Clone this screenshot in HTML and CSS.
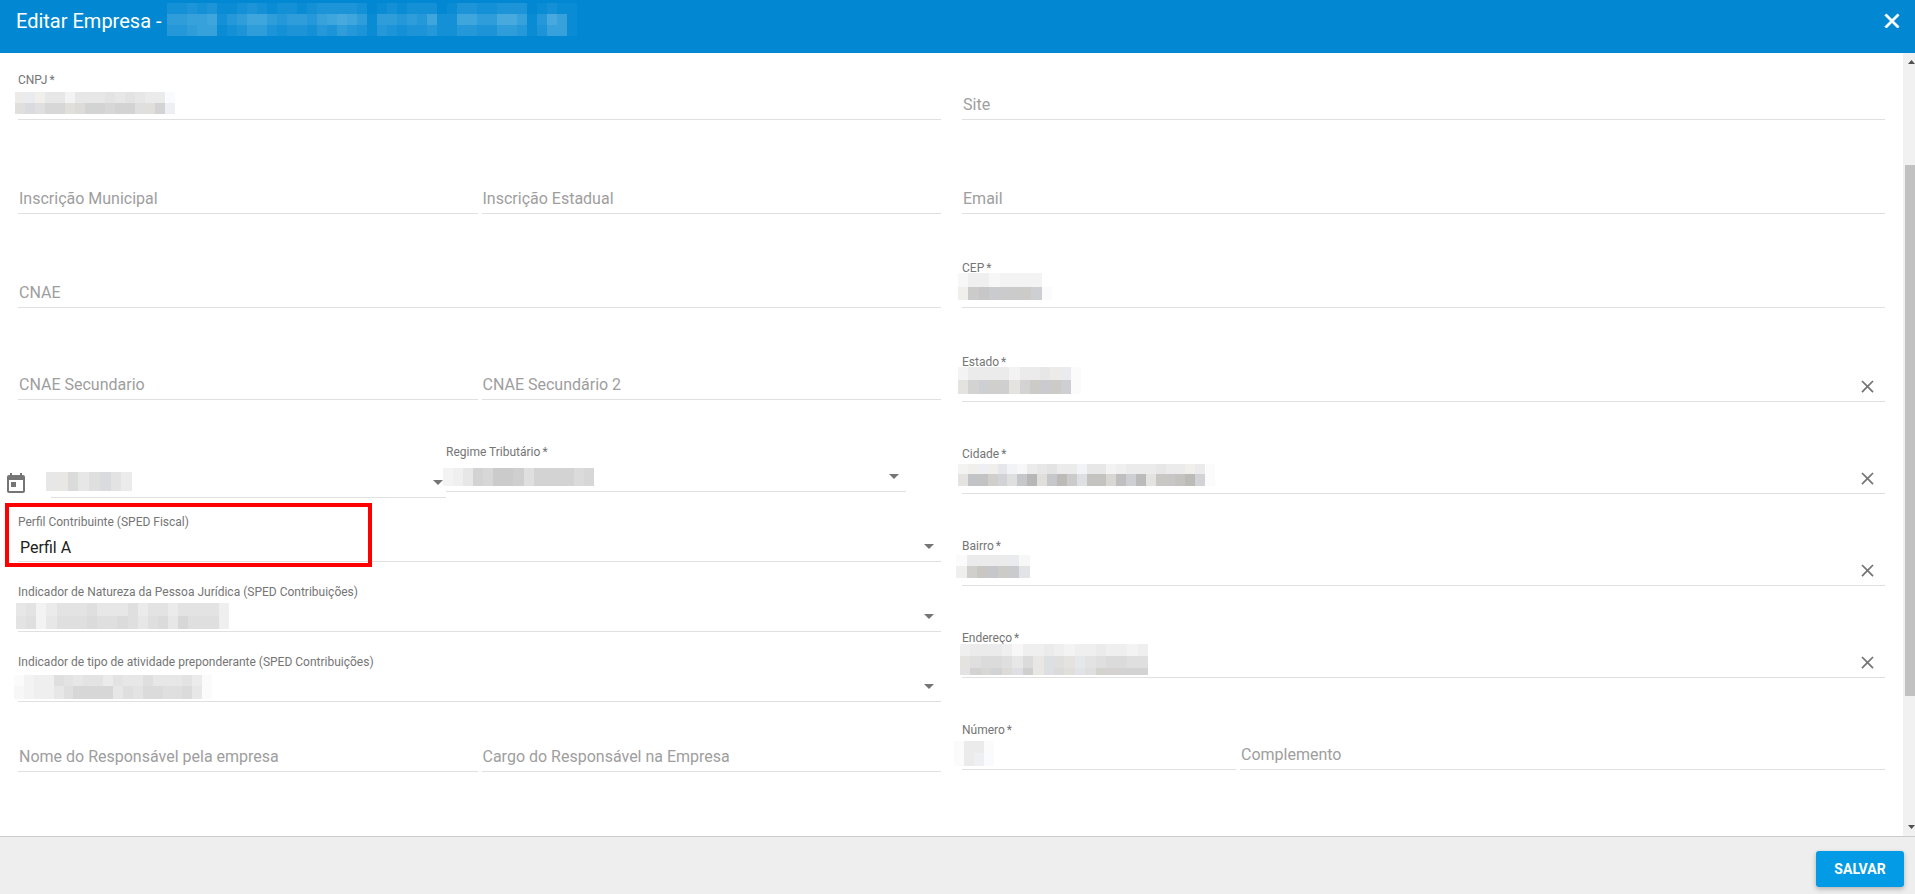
FILE: index.html
```html
<!DOCTYPE html>
<html lang="pt-BR">
<head>
<meta charset="utf-8">
<title>Editar Empresa</title>
<link rel="stylesheet" href="styles.css">
</head>
<body>
<header class="topbar">
  <h1 class="title">Editar Empresa -</h1>
  <span class="redacted-title" data-width="410" data-heights="11,11,11" data-light="22323112321221233332012122201332233301211|55667245775455467875155454722775588614861|44566123553233243543143233422443355413661"></span>
  <button class="icon-btn close" type="button" aria-label="Fechar"><svg width="24" height="24" viewBox="0 0 24 24"><path fill="currentColor" d="M19 6.41L17.59 5 12 10.59 6.41 5 5 6.41 10.59 12 5 17.59 6.41 19 12 13.41 17.59 19 19 17.59 13.41 12z"/></svg></button>
</header>

<main class="content">
  <form class="form" id="empresa">
    <div class="column">
      <div class="row">
        <div class="field"><label for="cnpj">CNPJ<span class="req">*</span></label><input id="cnpj" type="text">
          <span class="mask mask-cnpj" data-width="160" data-heights="11,11" data-rows="-f+f-eggdggghghgff+b|-i+jikk-i-jllklli-il+e"></span></div>
      </div>
      <div class="row halves">
        <div class="field"><input class="bare" type="text" aria-label="Inscrição Municipal" placeholder="Inscrição Municipal"></div>
        <div class="field"><input class="bare" type="text" aria-label="Inscrição Estadual" placeholder="Inscrição Estadual"></div>
      </div>
      <div class="row snug">
        <div class="field"><input class="bare" type="text" aria-label="CNAE" placeholder="CNAE"></div>
      </div>
      <div class="row snug halves">
        <div class="field"><input class="bare" type="text" aria-label="CNAE Secundario" placeholder="CNAE Secundario"></div>
        <div class="field"><input class="bare" type="text" aria-label="CNAE Secundário 2" placeholder="CNAE Secundário 2"></div>
      </div>
      <div class="row date-row">
        <svg class="calendar" width="24" height="24" viewBox="0 0 24 24"><path fill="currentColor" d="M19 3h-1V1h-2v2H8V1H6v2H5c-1.11 0-1.99.9-1.99 2L3 19c0 1.1.89 2 2 2h14c1.1 0 2-.9 2-2V5c0-1.1-.9-2-2-2zm0 16H5V8h14v11zM7 10h5v5H7z"/></svg>
        <div class="field date"><input class="bare" type="text" aria-label="Data">
          <span class="arrow"></span>
          <span class="mask mask-date" data-width="86" data-heights="19" data-rows="g-gjgi+jhf"></span></div>
        <div class="field"><label for="regime">Regime Tributário<span class="req">*</span></label><select id="regime"><option></option></select><span class="arrow"></span>
          <span class="mask mask-regime" data-width="151" data-heights="18" data-rows="deglknnmilllljk"></span></div>
      </div>
      <div class="row compact">
        <div class="field highlighted"><label for="perfil">Perfil Contribuinte (SPED Fiscal)</label><select id="perfil"><option>Perfil A</option></select><span class="arrow"></span></div>
      </div>
      <div class="row compact">
        <div class="field"><label for="natureza">Indicador de Natureza da Pessoa Jurídica (SPED Contribuições)</label><select id="natureza"><option></option></select><span class="arrow"></span>
          <span class="mask mask-natureza" data-width="213" data-heights="13,13" data-rows="ghdfhhhigggifhhfhhhhe|hidgiiijiijigijgkiiie"></span></div>
      </div>
      <div class="row compact">
        <div class="field"><label for="atividade">Indicador de tipo de atividade preponderante (SPED Contribuições)</label><select id="atividade"><option></option></select><span class="arrow"></span>
          <span class="mask mask-atividade" data-width="198" data-heights="11,13" data-rows="bdeeihghhfhggiggghfb|cdeegikkkkgihjjiijgb"></span></div>
      </div>
      <div class="row compact halves">
        <div class="field"><input class="bare" type="text" aria-label="Nome do Responsável pela empresa" placeholder="Nome do Responsável pela empresa"></div>
        <div class="field"><input class="bare" type="text" aria-label="Cargo do Responsável na Empresa" placeholder="Cargo do Responsável na Empresa"></div>
      </div>
    </div>

    <div class="column">
      <div class="row">
        <div class="field"><input class="bare" type="text" aria-label="Site" placeholder="Site"></div>
      </div>
      <div class="row">
        <div class="field"><input class="bare" type="email" aria-label="Email" placeholder="Email"></div>
      </div>
      <div class="row">
        <div class="field"><label for="cep">CEP<span class="req">*</span></label><input id="cep" type="text">
          <span class="mask mask-cep" data-width="94" data-heights="14,13" data-rows="ceecdddda|-eno+nnn-n+mb"></span></div>
      </div>
      <div class="row snug">
        <div class="field"><label for="estado">Estado<span class="req">*</span></label><input id="estado" type="text">
          <button class="icon-btn clear" type="button" aria-label="Limpar estado"></button>
          <span class="mask mask-estado" data-width="123" data-heights="13,14" data-rows="dffffdffg-f+fb|-hl+m-mm-hl-n+n-n+mb"></span></div>
      </div>
      <div class="row snug">
        <div class="field"><label for="cidade">Cidade<span class="req">*</span></label><input id="cidade" type="text">
          <button class="icon-btn clear" type="button" aria-label="Limpar cidade"></button>
          <span class="mask mask-cidade" data-width="257" data-heights="10,12" data-rows="d-e+e-e+g+dcfghff+dggdefffgff-efb|-h+pp-m+li+os-i+o-rn+i-p-p-kq+mr-h-oo-p-r+lb"></span></div>
      </div>
      <div class="row snug">
        <div class="field"><label for="bairro">Bairro<span class="req">*</span></label><input id="bairro" type="text">
          <button class="icon-btn clear" type="button" aria-label="Limpar bairro"></button>
          <span class="mask mask-bairro" data-width="74" data-heights="11,12" data-rows="bffff+fc|e-m-o+o-n+n+h"></span></div>
      </div>
      <div class="row snug">
        <div class="field"><label for="endereco">Endereço<span class="req">*</span></label><input id="endereco" type="text">
          <button class="icon-btn clear" type="button" aria-label="Limpar endereço"></button>
          <span class="mask mask-endereco" data-width="188" data-heights="12,12,7" data-rows="efffeceefedeefeede|-hijjigj-g+ii-h+ghijjii|hl-k+l-j+im-g+ij-i+hi-l-llll"></span></div>
      </div>
      <div class="row number-row">
        <div class="field"><label for="numero">Número<span class="req">*</span></label><input id="numero" type="text">
          <span class="mask mask-numero" data-width="40" data-heights="12,13" data-rows="bffb|bf+e+b"></span></div>
        <div class="field"><input class="bare" type="text" aria-label="Complemento" placeholder="Complemento"></div>
      </div>
    </div>
  </form>
  <div class="scrollbar"><span class="scroll-up"></span><span class="thumb"></span><span class="scroll-down"></span></div>
</main>

<footer class="actions"><button class="save" type="submit" form="empresa">SALVAR</button></footer>
<script src="masks.js"></script>
</body>
</html>
```
FILE: masks.js
```js
// Draws the censoring mosaics. Each letter is a grey level (a = white);
// a leading "+" cools the tone and "-" warms it.
const NS = 'http://www.w3.org/2000/svg';

function drawMosaic(host, rows) {
  const width = Number(host.dataset.width);
  const heights = host.dataset.heights.split(',').map(Number);
  const svg = document.createElementNS(NS, 'svg');
  svg.setAttribute('width', width);
  svg.setAttribute('height', heights.reduce((a, b) => a + b, 0));
  svg.setAttribute('shape-rendering', 'crispEdges');
  let y = 0;
  rows.forEach((row, r) => {
    row.forEach((color, c) => {
      const left = Math.round(c * width / row.length);
      const right = Math.round((c + 1) * width / row.length);
      const rect = document.createElementNS(NS, 'rect');
      rect.setAttribute('x', left);
      rect.setAttribute('y', y);
      rect.setAttribute('width', right - left);
      rect.setAttribute('height', heights[r]);
      rect.setAttribute('fill', color);
      svg.appendChild(rect);
    });
    y += heights[r];
  });
  host.appendChild(svg);
}

document.querySelectorAll('[data-rows]').forEach(host => {
  drawMosaic(host, host.dataset.rows.split('|').map(row =>
    row.match(/[+-]?[a-z]/g).map(token => {
      const level = 255 - (token.slice(-1).charCodeAt(0) - 97) * 4;
      if (token[0] === '+') return `rgb(${level - 2},${level},${Math.min(255, level + 4)})`;
      if (token[0] === '-') return `rgb(${level + 2},${level},${level - 3})`;
      return `rgb(${level},${level},${level})`;
    })));
});

document.querySelectorAll('[data-light]').forEach(host => {
  drawMosaic(host, host.dataset.light.split('|').map(row =>
    [...row].map(d => `rgba(255,255,255,${d * 0.035})`)));
});

document.querySelectorAll('.clear').forEach(button => {
  button.innerHTML = '<svg width="21" height="21" viewBox="0 0 24 24"><path fill="currentColor" d="M19 6.41L17.59 5 12 10.59 6.41 5 5 6.41 10.59 12 5 17.59 6.41 19 12 13.41 17.59 19 19 17.59 13.41 12z"/></svg>';
});
```
FILE: styles.css
```css
*, *::after { box-sizing: border-box; }

body {
  margin: 0;
  height: 100vh;
  display: flex;
  flex-direction: column;
  overflow: hidden;
  background: #fff;
  color: #212121;
  font-family: Roboto, "Liberation Sans", sans-serif;
  font-size: 16px;
}

.topbar {
  display: flex;
  align-items: flex-start;
  padding: 3px 11px 17px 16px;
  background: #0288d3;
  color: #fff;
}

.title {
  margin: 0;
  font-size: 20px;
  line-height: 36px;
  font-weight: 400;
  height: 33px;
}

.redacted-title { display: flex; margin-left: 5px; }

.icon-btn {
  display: flex;
  padding: 0;
  border: 0;
  background: none;
  color: inherit;
  cursor: pointer;
}

.close { margin: 6px 0 0 auto; }
.close path { stroke: currentColor; stroke-width: 1; }

.content {
  flex: 1;
  min-height: 0;
  display: flex;
  overflow: hidden;
}

.form {
  flex: 1;
  display: grid;
  grid-template-columns: 1fr 1fr;
  align-items: start;
  gap: 21px;
  padding: 19px 18px 0;
}

.row {
  display: grid;
  align-items: end;
  margin-bottom: 46px;
}
.row.snug { margin-bottom: 44px; }
.row.compact { margin-bottom: 22px; }

.halves {
  grid-template-columns: 1fr 1fr;
  gap: 4px;
}

.number-row {
  grid-template-columns: 274fr 645fr;
  gap: 4px;
}

.date-row {
  grid-template-columns: 47px 395fr 460fr;
  margin: 0 0 16px -14px;
  padding-right: 35px;
  align-items: start;
}

.field {
  position: relative;
  display: flex;
  flex-direction: column;
  height: 48px;
  border-bottom: 1px solid #e0e0e0;
}

.field label {
  color: #757575;
  font-size: 12px;
  line-height: 16px;
}

.req { margin-left: 2px; }

.field input,
.field select {
  flex: 1;
  width: 100%;
  min-height: 0;
  margin: 0;
  padding: 2px 0 0 1px;
  border: 0;
  outline: 0;
  appearance: none;
  background: none;
  color: #212121;
  font: inherit;
}

.field select { padding: 3px 0 0 2px; }
.field .bare { padding-top: 18px; }
.field ::placeholder { color: #9e9e9e; opacity: 1; }

.date { margin-top: 6px; }

.calendar {
  margin-top: 28px;
  color: #757575;
}

.arrow {
  position: absolute;
  right: 7px;
  bottom: 12px;
  border: 5px solid transparent;
  border-top-color: #757575;
  border-bottom: 0;
  pointer-events: none;
}
.date .arrow { right: 3px; }

.clear {
  position: absolute;
  right: 7px;
  bottom: 4px;
  color: #757575;
}

.highlighted::after {
  content: "";
  position: absolute;
  left: -13px;
  top: -11px;
  width: 367px;
  height: 64px;
  border: 4px solid #f00;
  pointer-events: none;
}

.mask { position: absolute; display: flex; pointer-events: none; }
.mask-cnpj { left: -3px; top: 20px; }
.mask-date { left: -5px; top: 22px; }
.mask-regime { left: -3px; top: 24px; }
.mask-natureza { left: -2px; top: 19px; }
.mask-atividade { left: -4px; top: 21px; }
.mask-cep { left: -4px; top: 13px; }
.mask-estado { left: -4px; top: 13px; }
.mask-cidade { left: -4px; top: 18px; }
.mask-bairro { left: -6px; top: 17px; }
.mask-endereco { left: -2px; top: 14px; }
.mask-numero { left: -8px; top: 19px; }

.scrollbar {
  display: flex;
  flex-direction: column;
  align-items: flex-end;
  width: 12px;
  padding: 7px 0;
  overflow: hidden;
  background: #f1f1f1;
}

.scroll-up,
.scroll-down {
  width: 7px;
  height: 4px;
  background: #505050;
}
.scroll-up { clip-path: polygon(0 100%, 50% 0, 100% 100%); }
.scroll-down { clip-path: polygon(0 0, 50% 100%, 100% 0); margin-top: auto; }

.thumb {
  width: 10px;
  height: 69%;
  margin-top: 101px;
  background: #c1c1c1;
}

.actions {
  display: flex;
  justify-content: flex-end;
  padding: 14px 11px 7px;
  border-top: 1px solid #ccc;
  background: #eee;
}

.save {
  min-width: 88px;
  height: 36px;
  padding: 0 16px;
  border: 0;
  border-radius: 3px;
  background: #039be5;
  box-shadow: 0 2px 5px rgba(0, 0, 0, .26);
  color: #fff;
  font: 700 14px/34px Roboto, sans-serif;
  cursor: pointer;
}
```
